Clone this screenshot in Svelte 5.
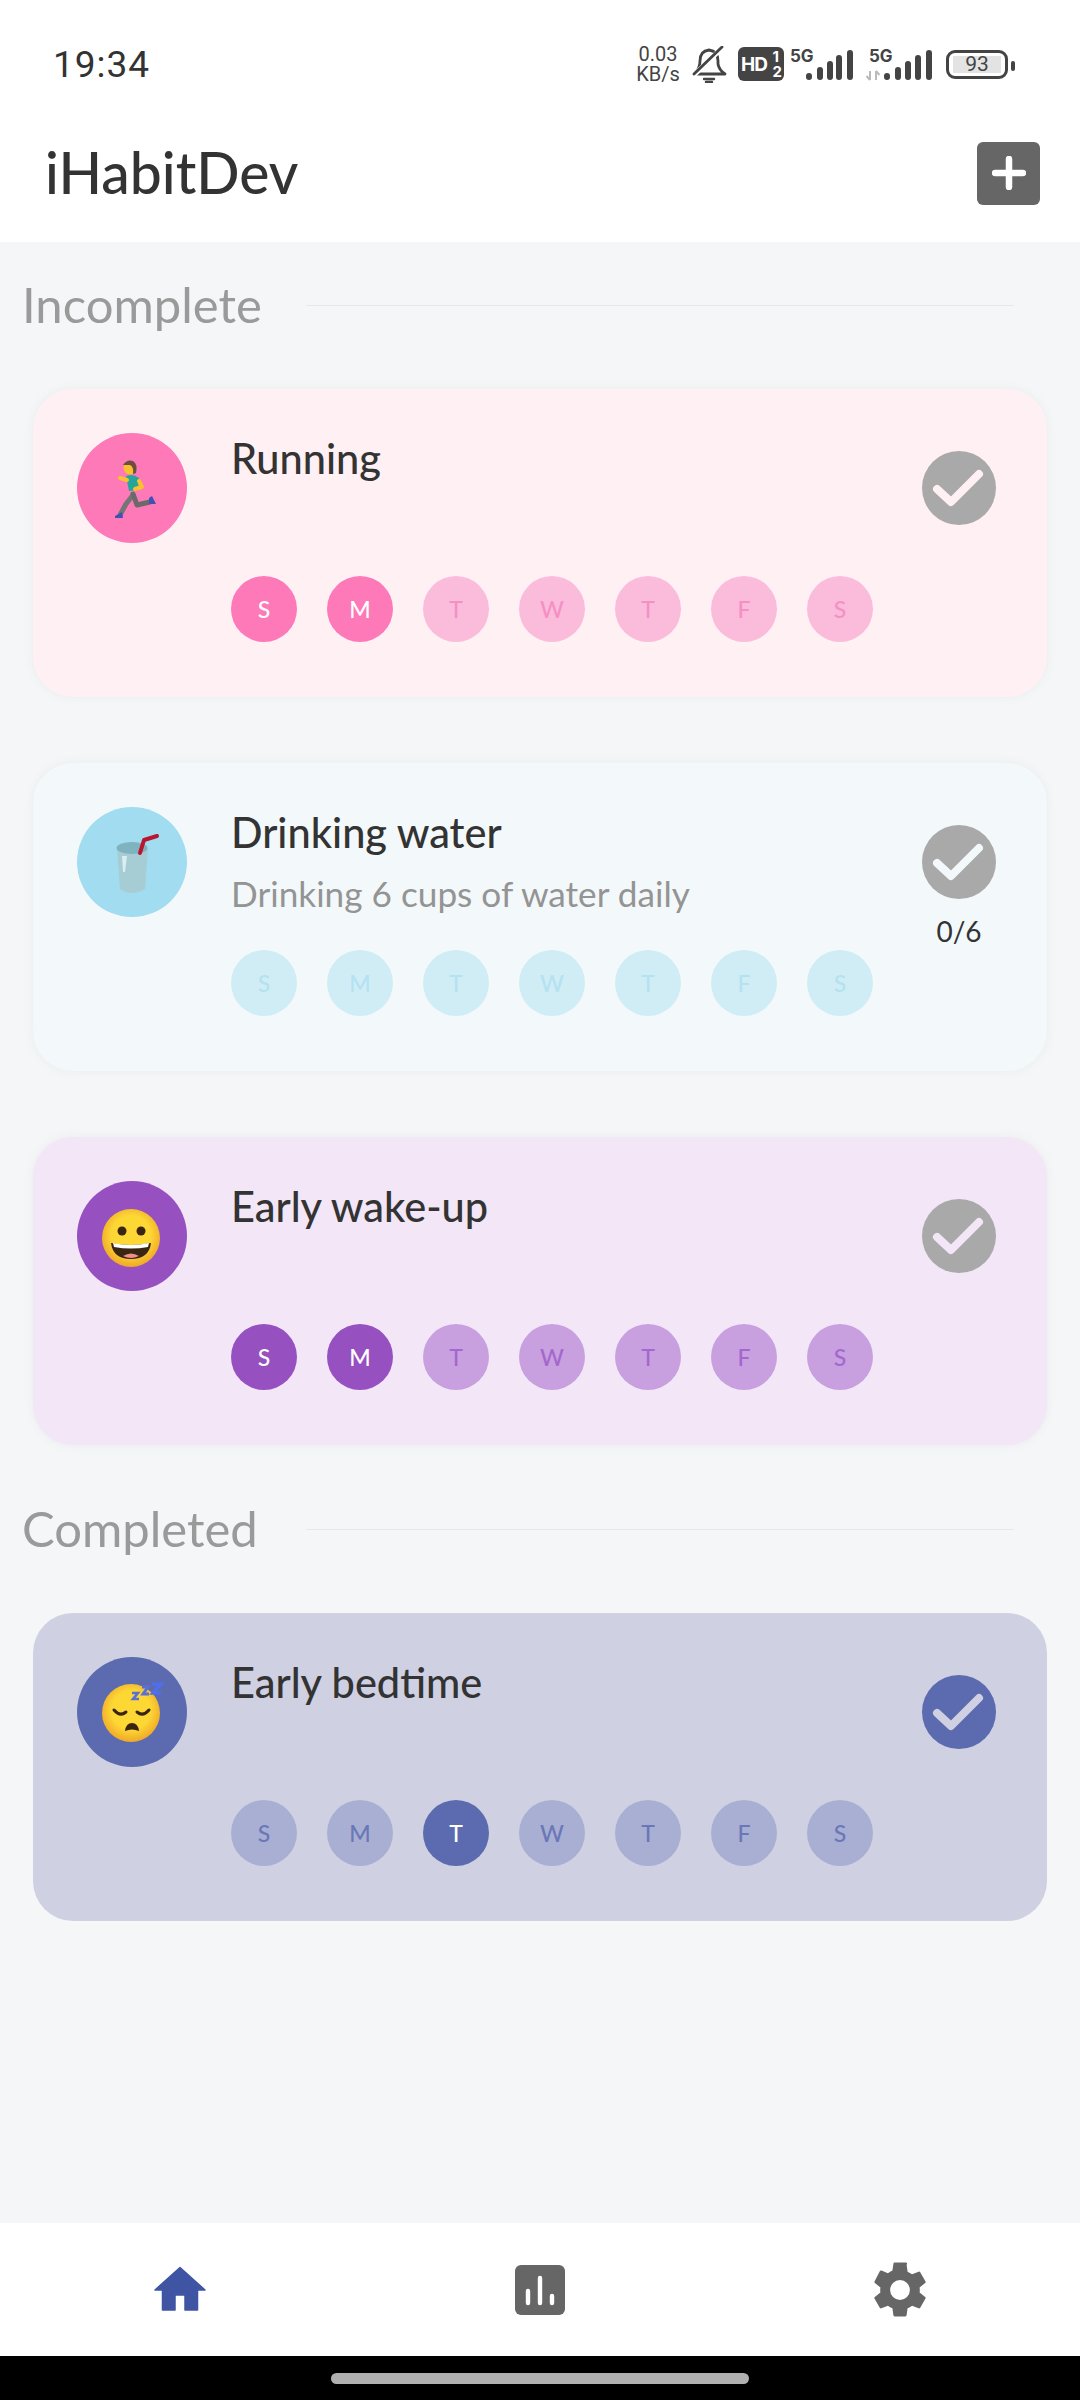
<script>
  const days = ['S', 'M', 'T', 'W', 'T', 'F', 'S'];

  const incomplete = [
    { id: 'run', name: 'Running', theme: 'pink', active: [0, 1] },
    { id: 'water', name: 'Drinking water', note: 'Drinking 6 cups of water daily', count: '0/6', theme: 'blue', active: [] },
    { id: 'wake', name: 'Early wake-up', theme: 'purple', active: [0, 1] }
  ];
  const completed = [{ id: 'sleep', name: 'Early bedtime', theme: 'indigo', active: [2], done: true }];
  const sections = [
    { title: 'Incomplete', habits: incomplete },
    { title: 'Completed', habits: completed }
  ];
</script>

{#snippet emoji(id)}
  <svg class="emoji" viewBox="0 0 110 110" aria-hidden="true">
    <defs>
      <radialGradient id="face-{id}" cx="50%" cy="45%" r="55%">
        <stop offset="0.6" stop-color="#fdd835" />
        <stop offset="1" stop-color="#f0a828" />
      </radialGradient>
    </defs>
    {#if id === 'run'}
      <path d="M56 62 L49 71 L43 82" fill="none" stroke="#757575" stroke-width="5" stroke-linecap="round" stroke-linejoin="round" />
      <path d="M56 61 L60 72 L73 69" fill="none" stroke="#6a6a6a" stroke-width="5" stroke-linecap="round" stroke-linejoin="round" />
      <path d="M38 83 Q42 81 45 79 L46 85 L38 85 Z" fill="#3f51b5" />
      <path d="M72 65 L75 63 L79 71 L72 71 Z" fill="#3f51b5" />
      <path d="M49 43 Q56 40 62 45 L61 57 L52 58 Z" fill="#26a69a" />
      <path d="M50 47 L43 45" stroke="#fbc02d" stroke-width="4" stroke-linecap="round" />
      <path d="M62 48 L65 54 L58 56" fill="none" stroke="#fbc02d" stroke-width="4" stroke-linecap="round" stroke-linejoin="round" />
      <circle cx="53" cy="35" r="6.5" fill="#fbc02d" />
      <path d="M46 32 Q50 26 56 28 Q61 31 59 40 L56 41 Q57 34 53 32 Z" fill="#6d4c41" />
    {:else if id === 'water'}
      <path d="M40 41 L71 41 L68 82 Q55 90 43 82 Z" fill="#a6cdd4" />
      <ellipse cx="55" cy="41" rx="15.5" ry="6" fill="#7fb3bf" />
      <path d="M45 49 L50 49 L48 65 L46 65 Z" fill="#d8eef4" />
      <path d="M63 46 L67 33 L80 29" fill="none" stroke="#b8172f" stroke-width="4" stroke-linecap="round" stroke-linejoin="round" />
    {:else if id === 'wake'}
      <circle cx="54" cy="57" r="29" fill="url(#face-wake)" />
      <circle cx="45" cy="50" r="4.5" fill="#3a2412" />
      <circle cx="64" cy="50" r="4.5" fill="#3a2412" />
      <path d="M34 62 Q54 66 74 62 Q72 78 54 78 Q36 78 34 62 Z" fill="#3a2412" />
      <path d="M36 62 Q54 66 72 62 L71 66 Q54 69 37 66 Z" fill="#fff" />
      <path d="M46 75 Q54 70 62 75 Q54 79 46 75 Z" fill="#ef8f8a" />
    {:else}
      <circle cx="54" cy="56" r="29" fill="url(#face-sleep)" />
      <path d="M37 53 Q43 60 49 55" fill="none" stroke="#3a2412" stroke-width="3" stroke-linecap="round" />
      <path d="M60 55 Q66 60 72 53" fill="none" stroke="#3a2412" stroke-width="3" stroke-linecap="round" />
      <path d="M48 74 Q49 66 55 66 Q61 66 62 74 Q55 71 48 74 Z" fill="#3a2412" />
      <path d="M55 36 L61 36 L56 42 L62 42" fill="none" stroke="#5b6fd8" stroke-width="2.6" />
      <path d="M65 30 L71 30 L66 37 L72 37" fill="none" stroke="#5b6fd8" stroke-width="3" />
      <path d="M75 27 L84 27 L76 36 L84 36" fill="none" stroke="#4f6fe8" stroke-width="3.4" />
    {/if}
  </svg>
{/snippet}

<div class="screen">
  <header class="top">
    <div class="status">
      <span class="time">19:34</span>
      <div class="status-icons">
        <span class="speed"><span>0.03</span><span>KB/s</span></span>
        <svg class="bell" width="36" height="37" viewBox="0 0 36 37" aria-hidden="true">
          <path d="M3 28 Q9 23 9 15 Q9 5 18 4 Q27 5 27 15 L27 18 Q28 24 34 28 Z" fill="none" stroke="#444" stroke-width="2.8" stroke-linejoin="round" />
          <path d="M13 33 H23 M15 36 H21" stroke="#444" stroke-width="2.4" stroke-linecap="round" />
          <path d="M1 31 L31 2" stroke="#fff" stroke-width="5" />
          <path d="M3 28 L31 1" stroke="#444" stroke-width="2.8" stroke-linecap="round" />
        </svg>
        <span class="hd"><b>HD</b><span class="sims"><i>1</i><i>2</i></span></span>
        <svg class="signal" width="63" height="42" viewBox="0 -6 63 42" aria-hidden="true">
          <text x="0" y="13" class="net">5G</text>
          <path d="M19 27v1M30 21v7M40 15v13M49 9v19M60 4v24" stroke="#444" stroke-width="6" stroke-linecap="round" />
        </svg>
        <svg class="signal" width="67" height="42" viewBox="0 -6 67 42" aria-hidden="true">
          <text x="4" y="13" class="net">5G</text>
          <path d="M5 22v9M1.5 27 5 31M11 31v-9M14.5 26 11 22" stroke="#bbb" stroke-width="2" fill="none" />
          <path d="M22 27v1M33 21v7M43 15v13M53 9v19M64 4v24" stroke="#444" stroke-width="6" stroke-linecap="round" />
        </svg>
        <span class="battery"><span class="level">93</span></span>
      </div>
    </div>
    <div class="titlebar">
      <h1>iHabitDev</h1>
      <button class="add" type="button" aria-label="Add habit">
        <svg width="34" height="34" viewBox="0 0 34 34" aria-hidden="true">
          <path d="M17 3v28M3 17h28" stroke="#fff" stroke-width="6.5" stroke-linecap="round" />
        </svg>
      </button>
    </div>
  </header>

  <main>
    {#each sections as section}
      <section>
        <div class="section-head">
          <h2>{section.title}</h2>
          <span class="rule"></span>
        </div>
        <div class="cards">
          {#each section.habits as habit}
            <article class="card {habit.theme}">
              <div class="avatar">{@render emoji(habit.id)}</div>
              <div class="body">
                <div>
                  <h3>{habit.name}</h3>
                  {#if habit.note}<p class="note">{habit.note}</p>{/if}
                </div>
                <ul class="days">
                  {#each days as day, i}
                    <li class:on={habit.active.includes(i)}>{day}</li>
                  {/each}
                </ul>
              </div>
              <div class="side">
                <span class="check" class:done={habit.done}>
                  <svg width="74" height="74" viewBox="0 0 74 74" aria-hidden="true">
                    <path d="M15 38 L29 51 L57 23" fill="none" stroke-width="8" stroke-linecap="round" stroke-linejoin="round" />
                  </svg>
                </span>
                {#if habit.count}<span class="count">{habit.count}</span>{/if}
              </div>
            </article>
          {/each}
        </div>
      </section>
    {/each}
  </main>

  <nav>
    <button type="button" aria-label="Home">
      <svg width="60" height="60" viewBox="0 0 24 24" aria-hidden="true">
        <path d="M10 20v-6h4v6h5v-8h3L12 3 2 12h3v8z" fill="#3f55a3" stroke="#3f55a3" stroke-width=".6" stroke-linejoin="round" />
      </svg>
    </button>
    <button type="button" aria-label="Statistics">
      <svg width="50" height="50" viewBox="0 0 50 50" aria-hidden="true">
        <rect width="50" height="50" rx="6" fill="#666" />
        <path d="M13 26v12M25 13v25M37 31v7" stroke="#fff" stroke-width="4.4" stroke-linecap="round" />
      </svg>
    </button>
    <button type="button" aria-label="Settings">
      <svg width="66" height="66" viewBox="0 0 24 24" aria-hidden="true">
        <path d="M19.14 12.94c.04-.3.06-.61.06-.94s-.02-.64-.07-.94l2.03-1.58a.49.49 0 0 0 .12-.61l-1.92-3.32a.49.49 0 0 0-.59-.22l-2.39.96c-.5-.38-1.03-.7-1.62-.94l-.36-2.54A.48.48 0 0 0 13.92 2h-3.84c-.24 0-.43.17-.47.41l-.36 2.54c-.59.24-1.13.57-1.62.94l-2.39-.96a.48.48 0 0 0-.59.22L2.74 8.87c-.12.21-.08.47.12.61l2.03 1.58c-.05.3-.09.63-.09.94s.02.64.07.94l-2.03 1.58a.49.49 0 0 0-.12.61l1.92 3.32c.12.22.37.29.59.22l2.39-.96c.5.38 1.03.7 1.62.94l.36 2.54c.05.24.24.41.48.41h3.84c.24 0 .44-.17.47-.41l.36-2.54c.59-.24 1.13-.56 1.62-.94l2.39.96c.22.08.47 0 .59-.22l1.92-3.32a.48.48 0 0 0-.12-.61zM12 15.6A3.6 3.6 0 1 1 12 8.4a3.6 3.6 0 0 1 0 7.2z" fill="#666" />
      </svg>
    </button>
  </nav>
  <div class="gesture"><span></span></div>
</div>

<style>
  :global(body) {
    margin: 0;
  }

  .screen {
    width: 1080px;
    height: 2400px;
    display: flex;
    flex-direction: column;
    background: #f5f6f8;
    color: #333;
    font-family: Lato, 'Noto Sans', sans-serif;
  }

  .top {
    background: #fff;
    height: 242px;
  }

  .status {
    height: 80px;
    padding: 24px 72px 0 53px;
    display: flex;
    justify-content: space-between;
    align-items: center;
  }

  .time {
    font-family: Roboto, sans-serif;
    font-size: 37px;
    letter-spacing: 1px;
    color: #333;
  }

  .status-icons {
    display: flex;
    align-items: center;
    color: #444;
  }

  .speed {
    width: 42px;
    margin-right: 12px;
    display: flex;
    flex-direction: column;
    align-items: center;
    font-family: Roboto, sans-serif;
    font-size: 20px;
    line-height: 20px;
  }

  .bell {
    margin-right: 11px;
  }

  .hd {
    width: 46px;
    height: 34px;
    margin-right: 6px;
    box-sizing: border-box;
    padding: 0 2px 0 3px;
    border-radius: 6px;
    background: #444;
    color: #fff;
    display: flex;
    align-items: center;
    justify-content: space-between;
    font-family: Inter, sans-serif;
  }

  .hd b {
    font-size: 19px;
    letter-spacing: -1px;
  }

  .sims {
    display: flex;
    flex-direction: column;
    font-size: 15px;
    line-height: 15px;
    font-weight: 700;
  }

  .sims i {
    font-style: normal;
  }

  .signal {
    margin-right: 12px;
  }

  .net {
    font: 700 17px Inter, sans-serif;
    fill: #444;
  }

  .battery {
    position: relative;
    width: 62px;
    height: 29px;
    margin-left: 2px;
    box-sizing: border-box;
    border: 3px solid #444;
    border-radius: 9px;
    padding: 3px 4px;
    display: flex;
  }

  .battery::after {
    content: '';
    position: absolute;
    right: -10px;
    top: 8px;
    width: 4px;
    height: 10px;
    border-radius: 2px;
    background: #444;
  }

  .level {
    flex: 1;
    background: #e3e3e3;
    font: 21px/17px Roboto, sans-serif;
    text-align: center;
  }

  .titlebar {
    height: 138px;
    padding: 0 40px 0 45px;
    display: flex;
    justify-content: space-between;
    align-items: center;
  }

  h1 {
    margin: -2px 0 0;
    font-size: 57px;
    font-weight: 500;
    color: #333;
  }

  .add {
    width: 63px;
    height: 63px;
    padding: 0;
    border: 0;
    border-radius: 6px;
    background: #666;
    display: grid;
    place-items: center;
  }

  main {
    flex: 1;
    padding-top: 42px;
    display: flex;
    flex-direction: column;
    gap: 63px;
  }

  .section-head {
    height: 42px;
    margin-bottom: 63px;
    padding: 0 66px 0 22px;
    display: flex;
    align-items: center;
  }

  h2 {
    width: 284px;
    margin: -3px 0 0;
    font-size: 49px;
    font-weight: 400;
    line-height: 42px;
    color: #9a9a9a;
  }

  .rule {
    flex: 1;
    height: 1px;
    background: #e6e7ea;
  }

  .cards {
    display: flex;
    flex-direction: column;
    gap: 66px;
    padding: 0 33px;
  }

  .card {
    height: 308px;
    box-sizing: border-box;
    padding: 44px 51px 55px 44px;
    border-radius: 40px;
    display: flex;
    background: var(--bg);
    box-shadow: 0 0 10px rgba(120, 120, 120, 0.08);
  }

  .pink {
    --bg: #fff0f3;
    --main: #fd79b8;
    --day: #fbbcdc;
    --letter: #f590c4;
  }

  .blue {
    --bg: #f3f9fa;
    --main: #a2dcf0;
    --day: #d0edf6;
    --letter: #b4e2f1;
  }

  .purple {
    --bg: #f2e6f7;
    --main: #9650c0;
    --day: #c8a0e0;
    --letter: #a468cc;
  }

  .indigo {
    --bg: #cfd0e2;
    --main: #5c6bb0;
    --day: #a9afd2;
    --letter: #6a77b8;
    box-shadow: none;
  }

  .avatar {
    width: 110px;
    height: 110px;
    flex: none;
    border-radius: 50%;
    background: var(--main);
  }

  .emoji {
    display: block;
  }

  .body {
    flex: 1;
    margin-left: 44px;
    display: flex;
    flex-direction: column;
    justify-content: space-between;
  }

  h3 {
    margin: 0;
    font-size: 41.5px;
    font-weight: 500;
    line-height: 50px;
    color: #333;
  }

  .note {
    margin: 15px 0 0;
    font-size: 35.2px;
    line-height: 42px;
    color: #949494;
  }

  .days {
    list-style: none;
    margin: 0;
    padding: 0;
    display: flex;
    gap: 30px;
  }

  .days li {
    width: 66px;
    height: 66px;
    border-radius: 50%;
    display: grid;
    place-items: center;
    background: var(--day);
    color: var(--letter);
    font-size: 23px;
    font-weight: 500;
  }

  .days li.on {
    background: var(--main);
    color: #fff;
  }

  .side {
    width: 74px;
    margin-top: 18px;
    display: flex;
    flex-direction: column;
    align-items: center;
    gap: 16px;
  }

  .check {
    width: 74px;
    height: 74px;
    border-radius: 50%;
    background: #a9a9a9;
    display: grid;
    place-items: center;
  }

  .check svg {
    display: block;
  }

  .check.done {
    background: var(--main);
  }

  .check path {
    stroke: var(--bg);
  }

  .count {
    font-size: 28px;
    line-height: 32px;
    color: #333;
  }

  nav {
    height: 133px;
    background: #fff;
    display: flex;
  }

  nav button {
    flex: 1;
    padding: 0;
    border: 0;
    background: none;
    display: grid;
    place-items: center;
  }

  .gesture {
    height: 44px;
    background: #000;
    display: flex;
    justify-content: center;
    padding-top: 17px;
    box-sizing: border-box;
  }

  .gesture span {
    width: 418px;
    height: 11px;
    border-radius: 6px;
    background: #b0b0b0;
  }
</style>
